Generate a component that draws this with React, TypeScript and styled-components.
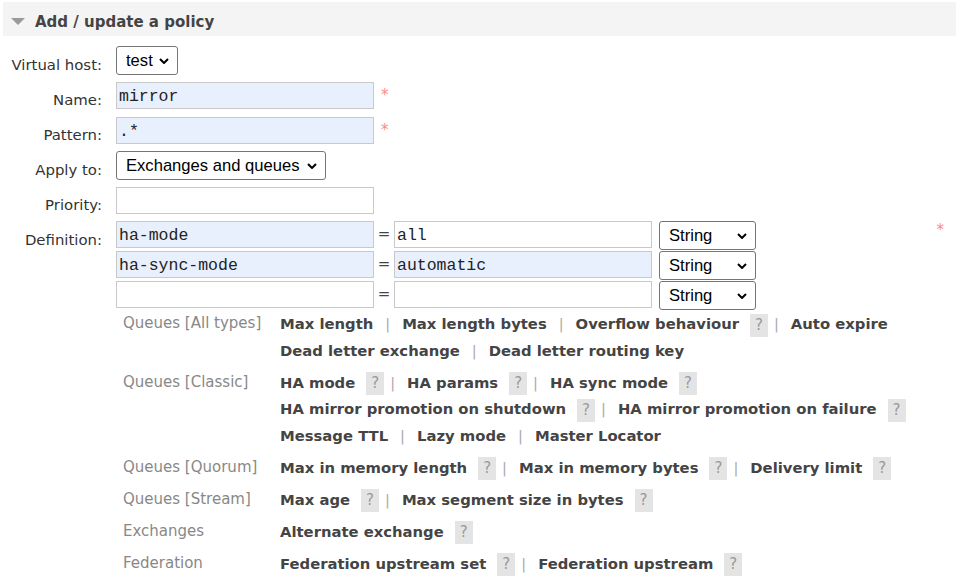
import React from "react";
import styled, { createGlobalStyle } from "styled-components";

const GlobalStyle = createGlobalStyle`
  html, body { margin: 0; padding: 0; background: #fff; }
  body { font-family: "DejaVu Sans", Verdana, sans-serif; color: #444; }
`;

const Page = styled.div`
  width: 956px;
  height: 588px;
  overflow: hidden;
`;

const SectionHeader = styled.div`
  box-sizing: border-box;
  margin: 2px 0 0 3px;
  height: 34px;
  background: #f4f4f4;
  display: flex;
  align-items: center;
  gap: 10px;
  padding: 5px 0 0 8px;
  font-size: 15px;
  font-weight: bold;
  color: #444;
`;

const Form = styled.div`
  margin-top: 7px;
  display: flex;
  flex-direction: column;
`;

const Row = styled.div`
  display: flex;
  align-items: center;
  height: 35px;
`;

const DefRow = styled.div`
  display: flex;
  align-items: flex-start;
  padding-top: 3px;
  padding-right: 12px;
`;

const Label = styled.label<{ $top?: boolean }>`
  width: 102px;
  flex: none;
  text-align: right;
  font-size: 14.9px;
  color: #333;
  margin-right: 14px;
  padding-top: ${(p) => (p.$top ? "11px" : "10px")};
  line-height: 17px;
  align-self: ${(p) => (p.$top ? "flex-start" : "center")};
  white-space: nowrap;
`;

const TextInput = styled.input<{ $filled?: boolean }>`
  box-sizing: border-box;
  width: 258px;
  height: 27px;
  flex: none;
  border: 1px solid #c9c9c9;
  background: ${(p) => (p.$filled ? "#e8f0fe" : "#fff")};
  font-family: "Liberation Mono", "Courier New", monospace;
  font-size: 16.5px;
  color: #222;
  padding: 2px 2px 0;
  margin: 0;
  outline: none;
`;

const Mand = styled.span<{ $def?: boolean }>`
  align-self: flex-start;
  margin-top: ${(p) => (p.$def ? "2px" : "10px")};
  margin-left: ${(p) => (p.$def ? "auto" : "7px")};
  color: #f88;
  font-size: 15px;
  line-height: 15px;
`;

const SelectWrap = styled.span<{ $w: number }>`
  position: relative;
  display: inline-flex;
  flex: none;
  width: ${(p) => p.$w}px;
  height: 29px;
`;

const NativeSelect = styled.select`
  appearance: none;
  -webkit-appearance: none;
  box-sizing: border-box;
  width: 100%;
  height: 100%;
  margin: 0;
  border: 1px solid #767676;
  border-radius: 3px;
  background: #fff;
  color: #000;
  font-family: "Liberation Sans", Arial, sans-serif;
  font-size: 16.6px;
  padding: 0 0 0 9px;
  outline: none;
`;

const Chevron = styled.svg`
  position: absolute;
  right: 9px;
  top: 50%;
  transform: translateY(-50%);
  pointer-events: none;
`;

const DefGrid = styled.div`
  display: flex;
  flex-direction: column;
  gap: 1px;
`;

const DefLine = styled.div`
  display: flex;
  align-items: flex-start;
  height: 29px;
`;

const Eq = styled.span`
  width: 20px;
  text-align: center;
  font-size: 15px;
  line-height: 27px;
  color: #444;
`;

const Gap = styled.span`
  width: 7px;
  flex: none;
`;

const HelpTable = styled.div`
  margin-left: 123px;
  margin-top: 1px;
  display: grid;
  grid-template-columns: 157px auto;
  row-gap: 5.4px;
`;

const GroupLabel = styled.div`
  font-size: 15px;
  color: #888;
  line-height: 26.6px;
  white-space: nowrap;
  margin-top: -1px;
`;

const GroupLinks = styled.div`
  display: flex;
  flex-direction: column;
`;

const LinkLine = styled.div`
  line-height: 26.6px;
  white-space: nowrap;
  font-size: 14.8px;
`;

const ArgLink = styled.span`
  font-weight: bold;
  color: #444;
`;

const Sep = styled.span`
  display: inline-block;
  padding: 0 12px;
  color: #aaa;
  font-size: 14.5px;
`;

const HelpBox = styled.span`
  display: inline-block;
  margin: 0 -6px 0 11px;
  padding: 0 5px;
  line-height: 23px;
  vertical-align: middle;
  background: #e4e4e4;
  color: #999;
  font-size: 15px;
`;

function Select({ w, value, options }: { w: number; value: string; options: string[] }) {
  return (
    <SelectWrap $w={w}>
      <NativeSelect defaultValue={value}>
        {options.map((o) => (
          <option key={o}>{o}</option>
        ))}
      </NativeSelect>
      <Chevron width="10" height="6" viewBox="0 0 10 6">
        <polyline points="1,1 5,5 9,1" fill="none" stroke="#000" strokeWidth="2" />
      </Chevron>
    </SelectWrap>
  );
}

type Item = { t: string; h?: boolean };

const groups: { label: string; lines: Item[][] }[] = [
  {
    label: "Queues [All types]",
    lines: [
      [{ t: "Max length" }, { t: "Max length bytes" }, { t: "Overflow behaviour", h: true }, { t: "Auto expire" }],
      [{ t: "Dead letter exchange" }, { t: "Dead letter routing key" }],
    ],
  },
  {
    label: "Queues [Classic]",
    lines: [
      [{ t: "HA mode", h: true }, { t: "HA params", h: true }, { t: "HA sync mode", h: true }],
      [{ t: "HA mirror promotion on shutdown", h: true }, { t: "HA mirror promotion on failure", h: true }],
      [{ t: "Message TTL" }, { t: "Lazy mode" }, { t: "Master Locator" }],
    ],
  },
  {
    label: "Queues [Quorum]",
    lines: [[{ t: "Max in memory length", h: true }, { t: "Max in memory bytes", h: true }, { t: "Delivery limit", h: true }]],
  },
  {
    label: "Queues [Stream]",
    lines: [[{ t: "Max age", h: true }, { t: "Max segment size in bytes", h: true }]],
  },
  { label: "Exchanges", lines: [[{ t: "Alternate exchange", h: true }]] },
  {
    label: "Federation",
    lines: [[{ t: "Federation upstream set", h: true }, { t: "Federation upstream", h: true }]],
  },
];

const defs = [
  { k: "ha-mode", v: "all", kf: true, vf: false },
  { k: "ha-sync-mode", v: "automatic", kf: true, vf: true },
  { k: "", v: "", kf: false, vf: false },
];

export default function App() {
  return (
    <Page>
      <GlobalStyle />
      <SectionHeader>
        <svg width="14" height="8" viewBox="0 0 14 8">
          <polygon points="0,0 14,0 7,7" fill="#9a9a9a" />
        </svg>
        <span>Add / update a policy</span>
      </SectionHeader>
      <Form>
        <Row>
          <Label>Virtual host:</Label>
          <Select w={62} value="test" options={["/", "test"]} />
        </Row>
        <Row>
          <Label>Name:</Label>
          <TextInput $filled defaultValue="mirror" />
          <Mand>*</Mand>
        </Row>
        <Row>
          <Label>Pattern:</Label>
          <TextInput $filled defaultValue=".*" />
          <Mand>*</Mand>
        </Row>
        <Row>
          <Label>Apply to:</Label>
          <Select w={210} value="Exchanges and queues" options={["Exchanges and queues", "Exchanges", "Queues"]} />
        </Row>
        <Row>
          <Label>Priority:</Label>
          <TextInput defaultValue="" />
        </Row>
        <DefRow>
          <Label $top>Definition:</Label>
          <DefGrid>
            {defs.map((d, i) => (
              <DefLine key={i}>
                <TextInput $filled={d.kf} defaultValue={d.k} />
                <Eq>=</Eq>
                <TextInput $filled={d.vf} defaultValue={d.v} />
                <Gap />
                <Select w={97} value="String" options={["String", "Number", "Boolean", "List"]} />
              </DefLine>
            ))}
          </DefGrid>
          <Mand $def>*</Mand>
        </DefRow>
      </Form>
      <HelpTable>
        {groups.map((g) => (
          <React.Fragment key={g.label}>
            <GroupLabel>{g.label}</GroupLabel>
            <GroupLinks>
              {g.lines.map((line, li) => (
                <LinkLine key={li}>
                  {line.map((it, ii) => (
                    <React.Fragment key={it.t}>
                      {ii > 0 && <Sep>|</Sep>}
                      <ArgLink>{it.t}</ArgLink>
                      {it.h && <HelpBox>?</HelpBox>}
                    </React.Fragment>
                  ))}
                </LinkLine>
              ))}
            </GroupLinks>
          </React.Fragment>
        ))}
      </HelpTable>
    </Page>
  );
}
